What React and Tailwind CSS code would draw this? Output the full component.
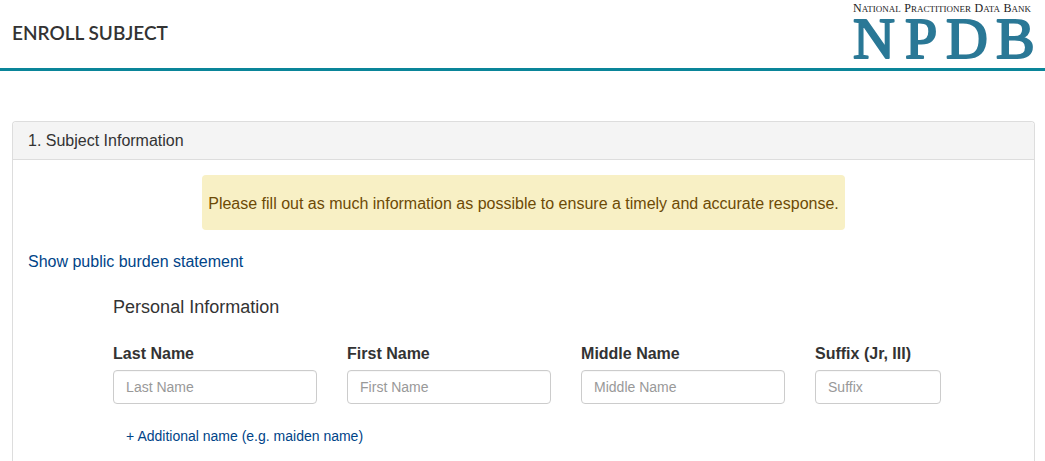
import React, { useState } from 'react';

const nameFields = [
  { id: 'lastName', label: 'Last Name', placeholder: 'Last Name', span: 'col-span-3' },
  { id: 'firstName', label: 'First Name', placeholder: 'First Name', span: 'col-span-3' },
  { id: 'middleName', label: 'Middle Name', placeholder: 'Middle Name', span: 'col-span-3' },
  { id: 'suffix', label: 'Suffix (Jr, III)', placeholder: 'Suffix', span: 'col-span-2' },
];

const logoWords = ['National', 'Practitioner', 'Data', 'Bank'];

function Logo() {
  return (
    <div className="w-[182px] font-['Liberation_Serif',serif]">
      {/* Small caps: full-size initials, smaller capitals after them */}
      <p className="flex justify-between pt-[2px] pr-[3px] pl-px text-xs leading-3 text-[#222222]">
        {logoWords.map((word) => (
          <span key={word}>
            {word[0]}
            <span className="text-[9px] uppercase">{word.slice(1)}</span>
          </span>
        ))}
      </p>
      <svg className="h-12 w-full overflow-visible" viewBox="0 0 182 48" role="img" aria-label="NPDB">
        <g fontFamily='"Liberation Serif", serif' fontSize="58" fill="#2a7896" stroke="#2a7896" strokeWidth="2" strokeLinejoin="round">
          <text x="1" y="43">N</text>
          <text x="53" y="43">P</text>
          <text x="94" y="43">D</text>
          <text x="144" y="43">B</text>
        </g>
      </svg>
    </div>
  );
}

function NameField({ id, label, placeholder, span, value, onChange }) {
  return (
    <div className={`${span} px-[15px]`}>
      <label htmlFor={id} className="mb-[5px] block text-base leading-[23px] font-bold whitespace-nowrap">
        {label}
      </label>
      <input
        id={id}
        type="text"
        value={value}
        onChange={onChange}
        placeholder={placeholder}
        className="block h-[34px] w-full rounded border border-[#cccccc] bg-white px-3 text-sm shadow-[inset_0_1px_1px_rgba(0,0,0,0.03)] placeholder:text-[#999999]"
      />
    </div>
  );
}

function App() {
  const [names, setNames] = useState({ lastName: '', firstName: '', middleName: '', suffix: '' });

  const handleChange = (e) => {
    setNames({ ...names, [e.target.id]: e.target.value });
  };

  return (
    <div className="bg-white font-['Liberation_Sans',Arial,sans-serif] text-base leading-[23px] text-[#333333]">
      <header className="flex h-[71px] items-start justify-between border-b-3 border-[#0a8599] pr-[11px] pl-3">
        <h1 className="pt-5 font-['Lato',sans-serif] text-[19px] leading-[26px] font-semibold">ENROLL SUBJECT</h1>
        <Logo />
      </header>

      <main className="pt-[50px] pr-[10px] pl-3">
        <section className="rounded-t border border-b-0 border-[#dddddd]">
          <h2 className="rounded-t border-b border-[#dddddd] bg-[#f4f4f4] px-[15px] py-[7px]">1. Subject Information</h2>

          <div className="px-[15px] pt-[15px]">
            <p className="mx-auto w-fit rounded bg-[#f8f0c5] px-1.5 pt-[17px] pb-[15px] text-[#6d4a05]">
              Please fill out as much information as possible to ensure a timely and accurate response.
            </p>
            <a href="#burden" className="mt-5 inline-block text-[#004488]">Show public burden statement</a>
          </div>

          <form className="ml-auto w-11/12 pt-[23px]">
            <h3 className="px-[15px] text-lg leading-[23px]">Personal Information</h3>
            <div className="mt-[23px] grid grid-cols-12">
              {nameFields.map((field) => (
                <NameField key={field.id} {...field} value={names[field.id]} onChange={handleChange} />
              ))}
            </div>
            <button type="button" className="mt-[21px] ml-[15px] block px-[13px] text-sm leading-[23px] text-[#004488]">
              + Additional name (e.g. maiden name)
            </button>
          </form>
          <div className="h-3.5" />
        </section>
      </main>
    </div>
  );
}

export default App;
